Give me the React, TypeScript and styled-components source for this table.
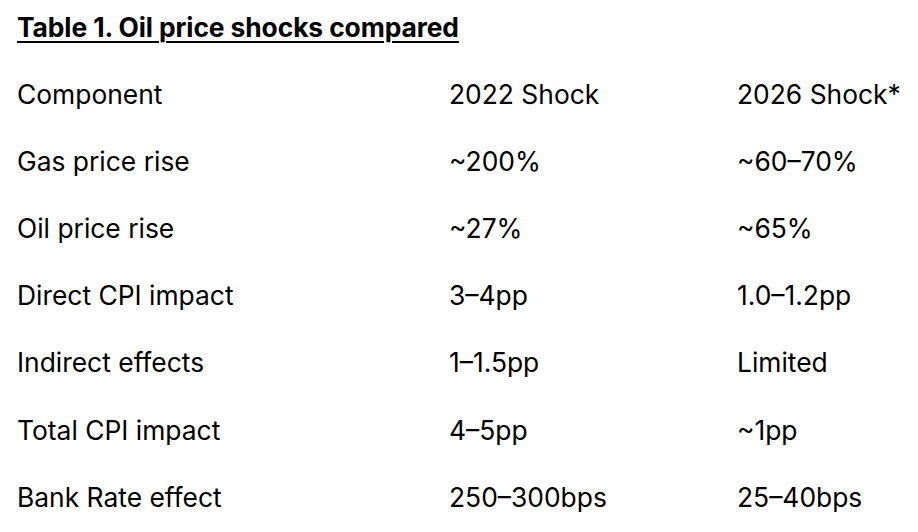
import styled, { createGlobalStyle } from "styled-components";

const GlobalStyle = createGlobalStyle`
	body {
		margin: 0;
		background: #fff;
		color: #000;
		font-family: Inter, "Liberation Sans", Arial, sans-serif;
	}
`;

const Page = styled.div`
	padding: 10px 0 0 17px;
`;

const Title = styled.h1`
	margin: 0;
	font-size: 26.4px;
	font-weight: 700;
	line-height: 34px;
	letter-spacing: -0.1px;
	text-decoration: underline;
	text-decoration-thickness: 2px;
	text-underline-offset: 4px;
`;

const Table = styled.div`
	display: grid;
	grid-template-columns: 432px 288px auto;
	grid-auto-rows: 67.2px;
	align-items: center;
	margin-top: 16px;
`;

const Cell = styled.div`
	font-size: 26.4px;
	line-height: 32px;
	white-space: nowrap;
`;

const rows = [
	["Component", "2022 Shock", "2026 Shock*"],
	["Gas price rise", "~200%", "~60–70%"],
	["Oil price rise", "~27%", "~65%"],
	["Direct CPI impact", "3–4pp", "1.0–1.2pp"],
	["Indirect effects", "1–1.5pp", "Limited"],
	["Total CPI impact", "4–5pp", "~1pp"],
	["Bank Rate effect", "250–300bps", "25–40bps"],
];

function App() {
	return (
		<Page>
			<GlobalStyle />
			<Title>Table 1. Oil price shocks compared</Title>
			<Table>
				{rows.map((row) =>
					row.map((text, i) => <Cell key={row[0] + i}>{text}</Cell>)
				)}
			</Table>
		</Page>
	);
}

export default App;
